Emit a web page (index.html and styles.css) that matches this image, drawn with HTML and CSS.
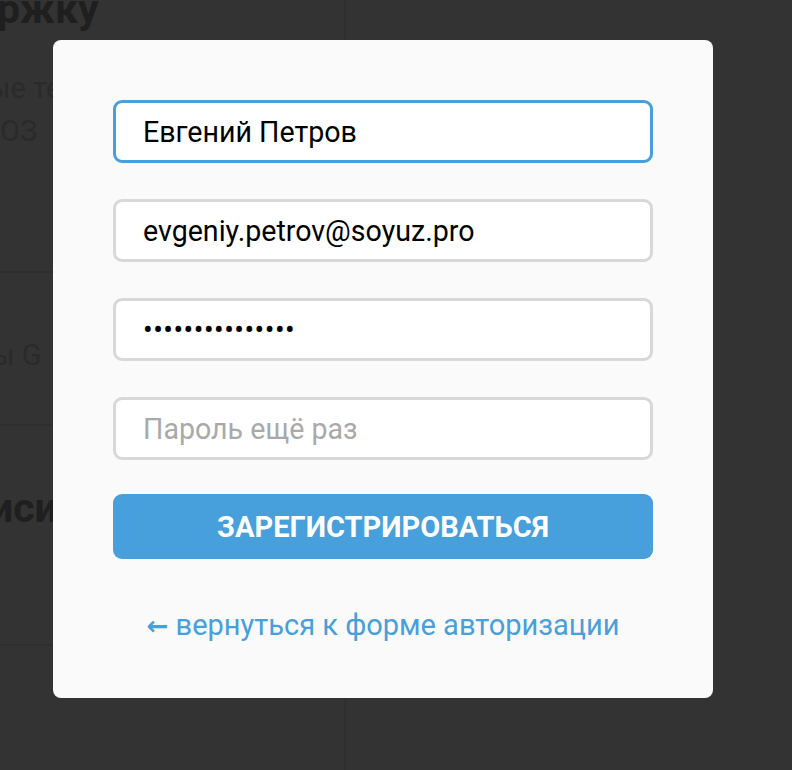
FILE: index.html
```html
<!DOCTYPE html>
<html lang="ru">
<head>
    <meta charset="UTF-8">
    <meta name="viewport" content="width=device-width, initial-scale=1.0">
    <title>Регистрация</title>
    <link rel="stylesheet" href="styles.css">
</head>
<body>
    <div class="page">
        <div class="side">
            <section class="side-block">
                <h2 class="side-title">ржку</h2>
                <p class="side-text">ые те<br>ОЗ</p>
            </section>
            <section class="side-block side-block--mid">
                <p class="side-text">ы G</p>
            </section>
            <section class="side-block side-block--low">
                <h2 class="side-title">иси</h2>
            </section>
        </div>
    </div>

    <div class="backdrop"></div>

    <div class="modal">
        <form class="reg-form">
            <input class="field field--focus" type="text" value="Евгений Петров">
            <input class="field" type="email" value="evgeniy.petrov@soyuz.pro">
            <input class="field field--secret" type="password" value="secretpassword1">
            <input class="field" type="password" placeholder="Пароль ещё раз">
            <button class="submit" type="button">Зарегистрироваться</button>
        </form>
        <a href="#" class="back-link"><span class="arrow">&larr;</span> вернуться к форме авторизации</a>
    </div>
</body>
</html>
```

FILE: styles.css
```css
:root {
    --overlay: #333333;
    --modal-bg: #fafafa;
    --accent: #479fdb;
    --field-border: #d8d8d8;
}

body {
    margin: 0;
    min-height: 100vh;
    background: var(--overlay);
    font-family: Roboto, 'Liberation Sans', sans-serif;
    overflow: hidden;
}

/* page behind the overlay */
.page {
    height: 770px;
}

.side {
    width: 344px;
    height: 100%;
    border-right: 2px solid #2f2f2f;
}

.side-block {
    height: 271px;
    border-bottom: 2px solid #2f2f2f;
    overflow: hidden;
}

.side-block--mid {
    height: 151px;
}

.side-block--low {
    height: 218px;
}

.side-title {
    margin: 0;
    font-size: 41px;
    line-height: 48px;
    font-weight: 700;
    color: #1f1f1f;
    white-space: nowrap;
}

.side-block:first-child .side-title {
    margin-top: -15px;
    text-indent: -3px;
}

.side-block--low .side-title {
    margin-top: 58px;
    text-indent: -10px;
}

.side-text {
    margin: 0;
    font-size: 29px;
    line-height: 43px;
    color: #2a2a2a;
    white-space: nowrap;
}

.side-block:first-child .side-text {
    margin-top: 34px;
    text-indent: -12px;
}

.side-block--mid .side-text {
    margin-top: 61px;
    text-indent: -8px;
}

/* modal */
.backdrop {
    position: fixed;
    inset: 0;
}

.modal {
    position: fixed;
    left: 53px;
    top: 40px;
    width: 540px;
    height: 538px;
    padding: 60px;
    background: var(--modal-bg);
    border-radius: 8px;
}

.reg-form {
    display: flex;
    flex-direction: column;
    gap: 36px;
}

.field {
    box-sizing: border-box;
    width: 100%;
    height: 63px;
    margin: 0;
    padding: 0 27px;
    border: 3px solid var(--field-border);
    border-radius: 9px;
    background: #fff;
    font-family: inherit;
    font-size: 28.6px;
    color: #000;
    outline: none;
}

.field::placeholder {
    color: #a9a9a9;
}

.field--focus {
    border-color: var(--accent);
}

.field--secret {
    letter-spacing: 0.5px;
}

.submit {
    height: 65px;
    margin-top: -2px;
    border: none;
    border-radius: 9px;
    background: var(--accent);
    color: #fff;
    font-family: inherit;
    font-size: 29px;
    font-weight: 700;
    text-transform: uppercase;
    cursor: pointer;
}

.back-link {
    display: block;
    margin-top: 49px;
    text-align: center;
    font-size: 29px;
    line-height: 34px;
    color: var(--accent);
    text-decoration: none;
}

.arrow {
    font-family: 'DejaVu Sans', sans-serif;
    font-size: 26px;
    font-weight: 700;
}
```
